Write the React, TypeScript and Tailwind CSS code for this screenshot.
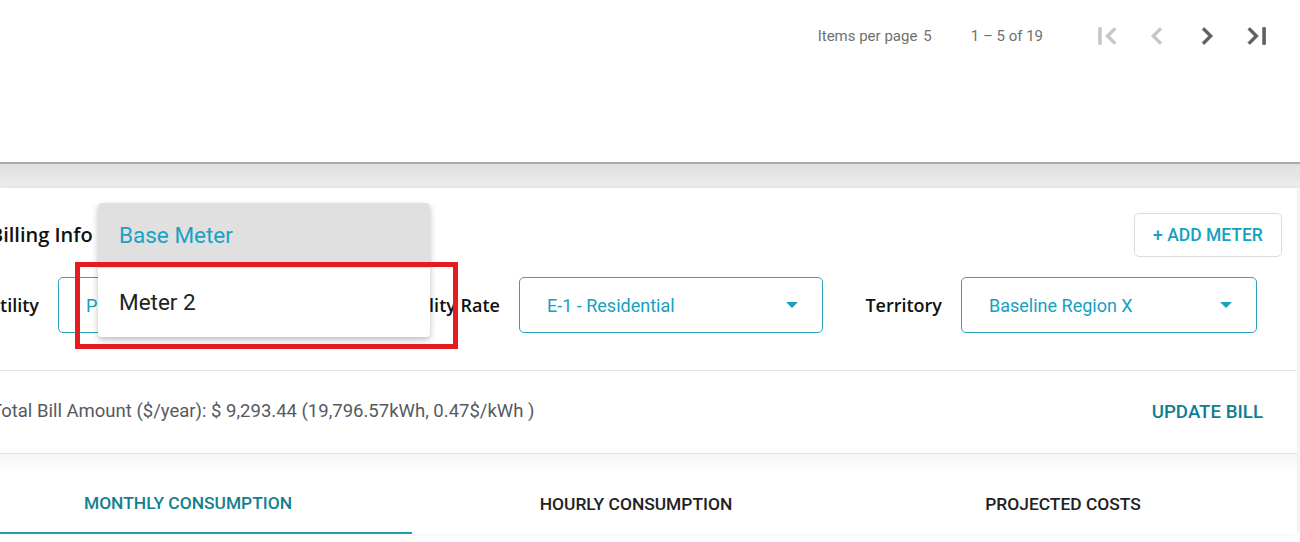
import React from "react";

const roboto = { fontFamily: "Roboto, 'Liberation Sans', sans-serif" };

function Icon({ d, color }: { d: string; color: string }) {
  return (
    <svg width="34" height="34" viewBox="0 0 24 24" fill={color}>
      <path d={d} stroke={color} strokeWidth="0.5" />
    </svg>
  );
}

function Caret() {
  return (
    <svg width="12" height="7" viewBox="0 0 12 7" className="shrink-0">
      <path d="M0 0h12L6 6z" fill="#1aa0c0" />
    </svg>
  );
}

function Select({ text, w }: { text: string; w: string }) {
  return (
    <div
      className={`${w} h-[56px] shrink-0 rounded-[5px] border border-[#2aa3bd] flex items-center justify-between pl-[27px] pr-[24px]`}
    >
      <span className="text-[18px] text-[#17a0c0] whitespace-nowrap">{text}</span>
      <Caret />
    </div>
  );
}

function Label({ text, w }: { text: string; w: string }) {
  return (
    <div className={`${w} shrink-0 flex justify-end pr-[19px]`}>
      <span
        className="text-[18px] font-semibold text-[#111] whitespace-nowrap"
        style={{ fontFamily: "'Open Sans', 'Noto Sans', sans-serif" }}
      >
        {text}
      </span>
    </div>
  );
}

export default function App() {
  return (
    <div className="w-[1300px] h-[542px] overflow-hidden relative bg-white" style={roboto}>
      {/* top pagination */}
      <div className="h-[162px] bg-white">
        <div className="h-[72px] flex items-center justify-end pr-[26px] text-[15px] text-[#707070]">
          <span>Items per page</span>
          <span className="ml-[6px]">5</span>
          <span className="ml-[39px]">1 – 5 of 19</span>
          <div className="ml-[47px] flex items-center gap-[16px]">
            <Icon color="#c6c6c6" d="M18.41 16.59L13.82 12l4.59-4.59L17 6l-6 6 6 6zM6 6h2v12H6z" />
            <Icon color="#c6c6c6" d="M15.41 7.41L14 6l-6 6 6 6 1.41-1.41L10.83 12z" />
            <Icon color="#5f5f5f" d="M10 6L8.59 7.41 13.17 12l-4.58 4.59L10 18l6-6z" />
            <Icon color="#5f5f5f" d="M5.59 7.41L10.18 12l-4.59 4.59L7 18l6-6-6-6zM16 6h2v12h-2z" />
          </div>
        </div>
      </div>
      {/* gray band */}
      <div className="h-[2px] bg-[#a9a9a9]" />
      <div className="h-[24px] bg-gradient-to-b from-[#e0e0e0] to-[#ededed]" />

      {/* card */}
      <div className="w-[1297px] bg-white shadow-[2px_0_4px_rgba(0,0,0,0.08)]">
        {/* header */}
        <div className="flex items-center justify-between pt-[25px] pr-[15px]">
          <span
            className="ml-[-10px] text-[20px] font-semibold text-[#111]"
            style={{ fontFamily: "'Open Sans', 'Noto Sans', sans-serif" }}
          >
            Billing Info
          </span>
          <button className="w-[148px] h-[44px] rounded-[5px] border border-[#dcdcdc] text-[17.5px] font-medium text-[#17a0c0]">
            + ADD METER
          </button>
        </div>
        {/* selects row */}
        <div className="flex items-center mt-[20px]">
          <Label text="Utility" w="w-[58px]" />
          <Select text="PG&E" w="w-[299px]" />
          <Label text="Utility Rate" w="w-[162px]" />
          <Select text="E-1 - Residential" w="w-[304px]" />
          <Label text="Territory" w="w-[138px]" />
          <Select text="Baseline Region X" w="w-[296px]" />
        </div>
        <div className="h-[37px]" />
        <div className="h-px bg-[#e2e2e2]" />
        {/* bill row */}
        <div className="h-[82px] flex items-center justify-between pr-[34px]">
          <span className="ml-[-9px] text-[18.5px] text-[#555a62] whitespace-nowrap">
            Total Bill Amount ($/year): $ 9,293.44 (19,796.57kWh, 0.47$/kWh )
          </span>
          <span className="text-[18.7px] font-medium text-[#0f7e92]">UPDATE BILL</span>
        </div>
        <div className="h-px bg-[#e2e2e2]" />
        <div className="h-[20px] bg-gradient-to-b from-[#f6f6f6] to-white" />
        {/* tabs */}
        <div className="flex ml-[-36px] h-[60px]">
          <div className="w-[448px] shrink-0 flex flex-col">
            <div className="flex-1 flex items-center justify-center text-[17.4px] font-medium text-[#137f90]">
              MONTHLY CONSUMPTION
            </div>
            <div className="h-[2px] bg-[#1a9db4]" />
          </div>
          <div className="w-[448px] shrink-0 flex items-center justify-center text-[17.4px] font-medium text-[#222]">
            HOURLY CONSUMPTION
          </div>
          <div className="w-[406px] shrink-0 flex items-center justify-center text-[17.4px] font-medium text-[#222]">
            PROJECTED COSTS
          </div>
        </div>
      </div>

      {/* dropdown menu */}
      <div className="absolute left-[98px] top-[203px] w-[332px] rounded-[4px] bg-white shadow-[0_3px_6px_rgba(0,0,0,0.25)] overflow-hidden">
        <div className="h-[65px] bg-[#e0e0e0] flex items-center pl-[21px] text-[22.5px] text-[#1aa2c4]">
          Base Meter
        </div>
        <div className="h-[69px] flex items-center pl-[21px] text-[22.5px] text-[#222]">Meter 2</div>
      </div>
      {/* red annotation */}
      <div className="absolute left-[75px] top-[262px] w-[383px] h-[87px] border-[5px] border-[#e51c1f]" />
    </div>
  );
}
